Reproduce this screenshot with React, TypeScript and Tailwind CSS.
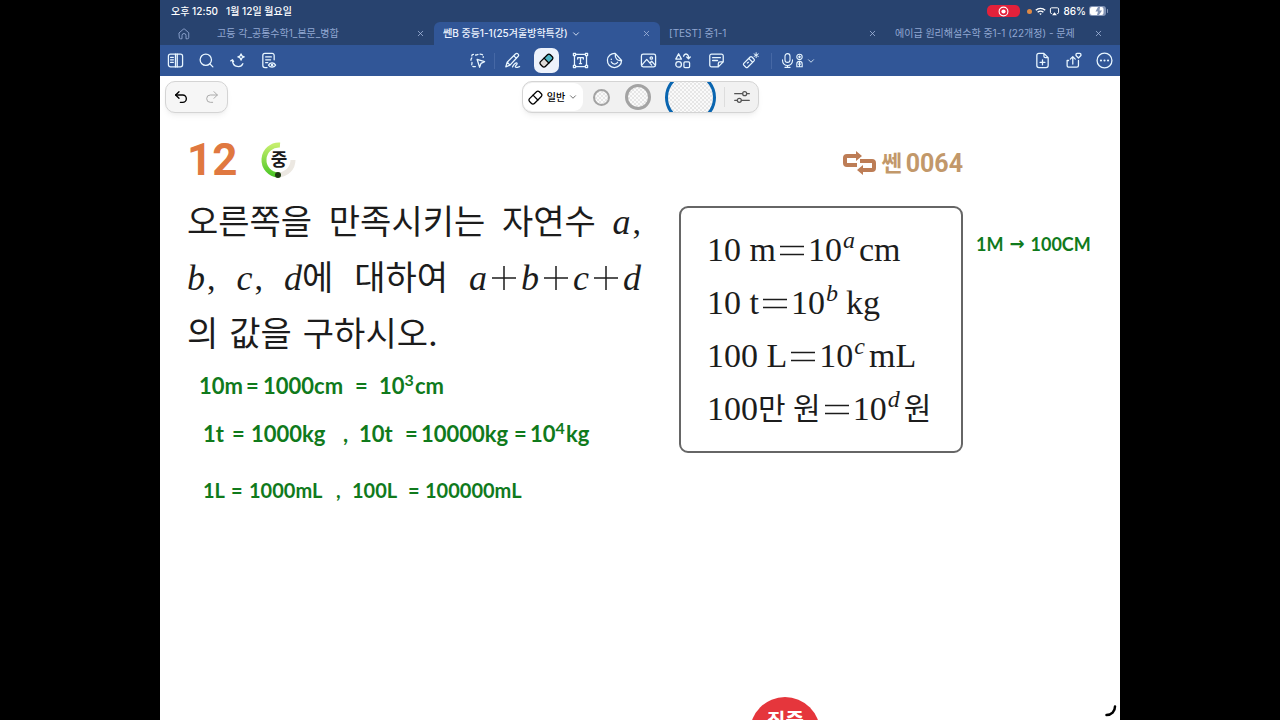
import { ReactNode } from "react";
import { ChevronDown, Redo2, Search, Undo2, X } from "lucide-react";

const Icon = ({ children, className = "size-[17px]" }: { children: ReactNode; className?: string }) => (
    <svg
        viewBox="0 0 24 24"
        fill="none"
        stroke="currentColor"
        strokeWidth="1.8"
        strokeLinecap="round"
        strokeLinejoin="round"
        className={className}
        aria-hidden="true"
    >
        {children}
    </svg>
);

const eraserShape = (
    <>
        <path d="M3.6 13.6 13.4 3.8a2.8 2.8 0 0 1 4 0l2.8 2.8a2.8 2.8 0 0 1 0 4l-9.8 9.8a2.8 2.8 0 0 1-4 0l-2.8-2.8a2.8 2.8 0 0 1 0-4Z" />
        <path d="m8.500 8.700 6.800 6.800" />
    </>
);

const leftTools = [
    {
        name: "사이드바",
        icon: (
            <Icon>
                <rect x="2" y="3" width="20" height="18" rx="3" />
                <path d="M12 3v18M5 7.5h4M5 11h4M5 14.5h4M14.5 3v18" />
            </Icon>
        ),
    },
    { name: "검색", icon: <Search className="size-[17px]" strokeWidth={1.8} /> },
    {
        name: "AI",
        icon: (
            <Icon>
                <path d="M2.500 12.500 5 11l1.500 2.500M5 12.500c.5 9.500 12 10 14.500 4M17 2.500c.5 3 1.500 4 4.500 4.500-3 .5-4 1.500-4.500 4.500-.5-3-1.500-4-4.500-4.500 3-.5 4-1.500 4.500-4.500Z" />
            </Icon>
        ),
    },
    {
        name: "읽기 모드",
        icon: (
            <Icon>
                <path d="M20 11V5a3 3 0 0 0-3-3H7a3 3 0 0 0-3 3v14a3 3 0 0 0 3 3h3M8 7h8M8 11h7M8 15h3" />
                <path d="M12 18.500c2.500-4 7.500-4 10 0-2.500 4-7.500 4-10 0Z" />
                <circle cx="17" cy="18.500" r="1" />
            </Icon>
        ),
    },
];

const centerTools = [
    {
        name: "펜",
        icon: (
            <Icon>
                <path d="m2.500 21 2-6.500L16.500 2.500a2 2 0 0 1 3 0l.5.5a2 2 0 0 1 0 3L8.500 18.500ZM4.500 14.500l4 4M14 5.500l3.500 3.500" />
                <path d="M12 21c2-4 5.500-7 6.500-5s-3.500 3.500-2.500 5 3 .5 6-.5" />
            </Icon>
        ),
    },
    {
        name: "지우개",
        active: true,
        icon: (
            <Icon>
                <path d="m8.500 8.700 4.900-4.900a2.800 2.800 0 0 1 4 0l2.800 2.800a2.800 2.800 0 0 1 0 4l-4.900 4.900Z" fill="#4fb5c5" stroke="none" />
                <path d="m8.500 8.700-4.900 4.900a2.800 2.800 0 0 0 0 4l2.800 2.800a2.800 2.800 0 0 0 4 0l4.900-4.900Z" fill="#dedad8" stroke="none" />
                {eraserShape}
            </Icon>
        ),
    },
    {
        name: "텍스트",
        icon: (
            <Icon>
                <path d="M3.500 5v14M20.500 5v14M5 3.500h14M5 20.500h14M8 10V8h8v2M12 8v8.500M10.500 16.500h3" />
                <rect x="2" y="2" width="3" height="3" />
                <rect x="19" y="2" width="3" height="3" />
                <rect x="2" y="19" width="3" height="3" />
                <rect x="19" y="19" width="3" height="3" />
            </Icon>
        ),
    },
    {
        name: "스티커",
        icon: (
            <Icon>
                <path d="M13 2a10 10 0 1 0 9 10c-6 1-9.500-3-9-10ZM13 2l9 10M7.500 14c2 4 7 4 9 .5M7.500 10v.5" />
            </Icon>
        ),
    },
    {
        name: "이미지",
        icon: (
            <Icon>
                <rect x="2" y="3" width="20" height="18" rx="2.500" />
                <circle cx="16" cy="8.500" r="1.700" />
                <path d="m2.500 18.500 7-8 7 8M14 15.500l2.500-2.500 5 5.500" />
            </Icon>
        ),
    },
    {
        name: "도형",
        icon: (
            <Icon>
                <path d="m6.500 2.500 4 7.500h-8Z" />
                <circle cx="6.500" cy="17.500" r="4" />
                <rect x="14" y="14" width="8" height="8" rx="1.500" />
                <path d="M13.500 6c1-4 5.500-4.500 7 0v3M18 7l2.500 2.500L23 7" />
            </Icon>
        ),
    },
    {
        name: "메모",
        icon: (
            <Icon>
                <path d="M5 3h14a2.500 2.500 0 0 1 2.500 2.500V14L14.500 21H5a2.500 2.500 0 0 1-2.500-2.500v-13A2.500 2.500 0 0 1 5 3ZM21.500 14h-4.500a2.500 2.500 0 0 0-2.500 2.500V21M6.500 8h11M6.500 12h7" />
            </Icon>
        ),
    },
    {
        name: "레이저",
        icon: (
            <Icon>
                <path d="m2.500 16 9-9a2 2 0 0 1 2.500 0l3 3a2 2 0 0 1 0 2.500l-9 9a2 2 0 0 1-2.500 0l-3-3a2 2 0 0 1 0-2.500ZM9.500 9l5.500 5.500M7.500 15.500l1.500-1" />
                <path d="M20 1v7M17 2.700l6 3.600M23 2.700l-6 3.600" strokeWidth="1.300" />
            </Icon>
        ),
    },
];

const rightTools = [
    {
        name: "페이지 추가",
        icon: (
            <Icon>
                <path d="M14 2H7a3 3 0 0 0-3 3v14a3 3 0 0 0 3 3h10a3 3 0 0 0 3-3V8ZM14 2v4a2 2 0 0 0 2 2h4M12 11v7M8.500 14.500h7" />
            </Icon>
        ),
    },
    {
        name: "공유",
        icon: (
            <Icon>
                <path d="M5 12H3v7a2.500 2.500 0 0 0 2.500 2.500h11A2.500 2.500 0 0 0 19 19v-7M11 17V7M7.500 10 11 6.500l3.500 3.500" />
                <path d="M17 2h4a1.500 1.500 0 0 1 1.500 1.500v1.500L19 8.500l-3.500-3.500V3.500A1.500 1.500 0 0 1 17 2Z" />
            </Icon>
        ),
    },
    {
        name: "더 보기",
        icon: (
            <Icon>
                <circle cx="12" cy="12" r="10.500" />
                <path d="M7 12h.01M12 12h.01M17 12h.01" strokeWidth="3" />
            </Icon>
        ),
    },
];

const tabs = [
    { title: "고등 각_공통수학1_본문_병합" },
    { title: "쎈B 중등1-1(25겨울방학특강)", active: true },
    { title: "[TEST] 중1-1" },
    { title: "에이급 원리해설수학 중1-1 (22개정) - 문제" },
];

const StatusBar = () => (
    <div className="flex h-[22px] items-center bg-[#28436f] px-[11px] text-[10px] font-medium text-white">
        <span>오후 12:50</span>
        <span className="ml-2">1월 12일 월요일</span>
        <div className="ml-auto flex items-center gap-[3px]">
            <span className="mr-1 flex h-3 w-[33px] items-center justify-center rounded-[5px] bg-[#e2213b]">
                <svg viewBox="0 0 12 12" className="size-[11px]">
                    <circle cx="6" cy="6" r="4.800" fill="none" stroke="#fff" strokeWidth="1.200" />
                    <circle cx="6" cy="6" r="2.300" fill="#fff" />
                </svg>
            </span>
            <span className="size-[5px] rounded-full bg-[#e08a45]" />
            <svg viewBox="0 0 12 10" className="h-[9px] w-[11px]" fill="none" stroke="#fff" strokeWidth="1.600">
                <path d="M.8 3.600a7.500 7.500 0 0 1 10.400 0M2.800 5.900a4.600 4.600 0 0 1 6.400 0" />
                <path d="M4.600 7.500a2 2 0 0 1 2.800 0L6 9Z" fill="#fff" stroke="none" />
            </svg>
            <svg viewBox="0 0 12 11" className="h-[9px] w-[11px]" fill="none" stroke="#fff" strokeWidth="1.200">
                <path d="M3 8H2.500A1.500 1.500 0 0 1 1 6.500v-4A1.500 1.500 0 0 1 2.500 1h7A1.500 1.500 0 0 1 11 2.500v4A1.500 1.500 0 0 1 9.500 8H9" />
                <path d="m6 6.500 3 3.500H3Z" fill="#fff" stroke="none" />
            </svg>
            <span>86%</span>
            <svg viewBox="0 0 20 10" className="h-[10px] w-5">
                <rect x="0" y="0" width="17" height="10" rx="3" fill="#8092b4" />
                <path d="M3 1h6L6.500 5.500H9L8 9H3a2 2 0 0 1-2-2V3a2 2 0 0 1 2-2ZM11 1h1.500a2 2 0 0 1 2 2v4a2 2 0 0 1-2 2H10l3-4.500h-2.500Z" fill="#fff" />
                <path d="M18.500 3.500v3" stroke="#8092b4" strokeLinecap="round" />
            </svg>
        </div>
    </div>
);

const TabBar = () => (
    <nav className="flex h-[23px] bg-[#28436f] pr-2 text-[10px] text-[#91a7d2]">
        <button aria-label="홈" className="flex w-12 items-center justify-center">
            <Icon className="size-3">
                <path d="m2.500 9.500 8-7a2.200 2.200 0 0 1 3 0l8 7V19a2.500 2.500 0 0 1-2.500 2.500H16V15a4 4 0 0 0-8 0v6.500H5A2.500 2.500 0 0 1 2.500 19Z" />
            </Icon>
        </button>
        {tabs.map((tab) => (
            <div
                key={tab.title}
                className={`flex min-w-0 flex-1 items-center px-[9px] ${tab.active ? "rounded-t-md bg-[#315697] font-medium text-[#eef4ff]" : ""}`}
            >
                <a href="#" className="truncate">{tab.title}</a>
                {tab.active && <ChevronDown className="ml-[3px] size-[10px]" />}
                <button aria-label="탭 닫기" className="ml-auto text-[#a9bce0]">
                    <X className="size-[9px]" strokeWidth={2} />
                </button>
            </div>
        ))}
    </nav>
);

const Toolbar = () => (
    <div className="grid h-[31px] grid-cols-[1fr_auto_1fr] items-center bg-[#315697] text-[#e8f6ff]">
        <div className="flex">
            {leftTools.map((tool) => (
                <button key={tool.name} aria-label={tool.name} className="flex w-[31px] justify-center">
                    {tool.icon}
                </button>
            ))}
        </div>
        <div className="flex items-center pr-1">
            <button aria-label="올가미" className="flex w-[34px] justify-center">
                <Icon>
                    <path
                        d="M9 20.500H6.500c-2 0-3-1.500-2.500-3.500.5-1.500.5-2.500-.5-4s-1-2.500 0-4 .5-2.500.5-3.500C4 4 5 3 7 3.500c2 1 3.500 1 5.500 0S17 3 18 3.500c2 .5 2.500 2 2 4"
                        strokeDasharray="3.500 3"
                    />
                    <path d="m11.500 10.500 10.500 3-5 2.500-2 5.500Z" />
                </Icon>
            </button>
            <span className="h-4 w-px bg-[#4668a5]" />
            {centerTools.map((tool) => (
                <button key={tool.name} aria-label={tool.name} className="flex w-[34px] justify-center">
                    {tool.active ? (
                        <span className="flex size-[25px] items-center justify-center rounded-[7px] bg-[#edf2fb] text-black">
                            {tool.icon}
                        </span>
                    ) : (
                        tool.icon
                    )}
                </button>
            ))}
            <span className="ml-1 h-4 w-px bg-[#4668a5]" />
            <button aria-label="녹음" className="ml-2 flex items-center">
                <Icon className="size-[15px]">
                    <rect x="8" y="1" width="8" height="14" rx="4" />
                    <path d="M4 11v1a8 8 0 0 0 16 0v-1M12 20v3M8 23h8" />
                </Icon>
                <svg viewBox="0 0 10 16" className="h-[15px] w-[9px]" fill="none" stroke="currentColor" strokeWidth="1.200">
                    <circle cx="5" cy="4" r="3" />
                    <path d="M3.500 4h3M5 2.500v3M2 15v-3a3 3 0 0 1 6 0v3ZM3.500 12h3M5 9.500V15" />
                </svg>
                <ChevronDown className="ml-[2px] size-[10px]" />
            </button>
        </div>
        <div className="flex justify-end">
            {rightTools.map((tool) => (
                <button key={tool.name} aria-label={tool.name} className="flex w-[31px] justify-center">
                    {tool.icon}
                </button>
            ))}
        </div>
    </div>
);

const checker = "bg-[repeating-conic-gradient(#e6e6e6_0_25%,#fafafa_0_50%)] bg-size-[4px_4px]";

const EraserOptions = () => (
    <div className="grid grid-cols-[1fr_auto_1fr] items-center px-[5px] pt-[5px]">
        <div>
            <div className="flex h-8 w-[63px] items-center justify-around rounded-[10px] border border-[#d4d4d4] bg-[#f6f6f6] shadow-md shadow-black/5">
                <button aria-label="실행 취소"><Undo2 className="size-4 text-black" strokeWidth={2} /></button>
                <button aria-label="다시 실행"><Redo2 className="size-4 text-[#aaa]" strokeWidth={1.5} /></button>
            </div>
        </div>
        <div className="flex h-8 w-[237px] items-center rounded-[10px] border border-[#d4d4d4] bg-[#f1f1f1] shadow-md shadow-black/5">
            <button className="flex h-7 w-[60px] items-center justify-center rounded-[9px] bg-white text-[10px] font-medium text-black">
                <Icon className="mr-[3px] size-[17px]">{eraserShape}</Icon>
                일반
                <ChevronDown className="ml-[3px] size-[10px] text-[#555]" />
            </button>
            <button aria-label="작게" className={`ml-[10px] size-[17px] rounded-full border-2 border-[#a3a3a3] ${checker}`} />
            <button aria-label="보통" className={`ml-[15px] size-[26px] rounded-full border-3 border-[#a3a3a3] ${checker}`} />
            <span className="ml-[14px] flex h-[30px] items-center overflow-hidden">
                <button aria-label="크게" className={`size-[51px] shrink-0 rounded-full border-3 border-[#0965b0] ${checker}`} />
            </span>
            <span className="ml-2 h-5 w-px bg-[#ddd]" />
            <button aria-label="설정" className="ml-[9px] text-[#555]">
                <Icon className="size-4">
                    <path d="M1 7h12M19 7h4M1 17h4M11 17h12" />
                    <circle cx="16" cy="7" r="3" />
                    <circle cx="8" cy="17" r="3" />
                </Icon>
            </button>
        </div>
    </div>
);

const Var = ({ children }: { children: ReactNode }) => (
    <i className="font-['Liberation_Serif',serif] text-[36px] leading-none">{children}</i>
);

const Comma = () => <span className="ml-[2px] font-['Liberation_Serif',serif]">,</span>;

const Plus = () => (
    <svg viewBox="0 0 26 26" className="size-[26px]" stroke="currentColor" strokeWidth="1.500" role="img" aria-label="+">
        <path d="M1 13h24M13 1v24" />
    </svg>
);

const conditions = [
    { left: "10 m", power: "a", right: "cm" },
    { left: "10 t", power: "b", right: "kg", gap: true },
    { left: "100 L", power: "c", right: "mL" },
    { left: "100", won: "만 원", power: "d", right: "원" },
];

// each word carries the width it takes on the page, up to the next one
const notes = [
    {
        row: "mt-2 text-[22px]",
        words: [
            { text: "10m", width: "w-[47px]" },
            { text: "=", width: "w-[17px]" },
            { text: "1000cm", width: "w-[92px]" },
            { text: "=", width: "w-6" },
            { text: "10", sup: "3", width: "w-9" },
            { text: "cm", width: "w-9" },
        ],
    },
    {
        row: "mt-4 pl-1 text-[22px]",
        words: [
            { text: "1t", width: "w-[29px]" },
            { text: "=", width: "w-[19px]" },
            { text: "1000kg", width: "w-[92px]" },
            { text: ",", width: "w-4" },
            { text: "10t", width: "w-[46px]" },
            { text: "=", width: "w-4" },
            { text: "10000kg", width: "w-[93px]" },
            { text: "=", width: "w-4" },
            { text: "10", sup: "4", width: "w-9" },
            { text: "kg", width: "w-8" },
        ],
    },
    {
        row: "mt-6 pl-1 text-[20px]",
        words: [
            { text: "1L", width: "w-7" },
            { text: "=", width: "w-[18px]" },
            { text: "1000mL", width: "w-[87px]" },
            { text: ",", width: "w-4" },
            { text: "100L", width: "w-[56px]" },
            { text: "=", width: "w-[17px]" },
            { text: "100000mL", width: "w-24" },
        ],
    },
];

const Problem = () => (
    <section className="flex px-[27px] pt-[25px] text-[#1c1c1c]">
        <div className="w-[454px] shrink-0">
            <header className="flex h-11 items-center">
                <h1 className="w-[72px] font-[Roboto,sans-serif] text-[44px] leading-none font-bold text-[#e07840]">
                    12
                </h1>
                <div className="grid size-10 place-items-center">
                    <svg viewBox="0 0 40 40" className="col-start-1 row-start-1 size-10" fill="none" strokeWidth="5">
                        <defs>
                            <linearGradient id="level" x1="0" y1="1" x2="0" y2="0">
                                <stop offset="0" stopColor="#4fc828" />
                                <stop offset="1" stopColor="#c4ee6c" />
                            </linearGradient>
                        </defs>
                        <path d="M34 20a15 15 0 0 1-15 15" stroke="#ece8e2" />
                        <path d="M21 5a15 15 0 0 0-2 30" stroke="url(#level)" />
                        <circle cx="19" cy="35" r="3" fill="#1d3a10" />
                    </svg>
                    <b className="col-start-1 row-start-1 text-[18px] leading-none">중</b>
                </div>
            </header>
            <div className="mt-3 text-[34px] leading-[56px] whitespace-nowrap">
                <p className="flex h-14 items-center justify-between">
                    <span>오른쪽을</span>
                    <span>만족시키는</span>
                    <span>자연수</span>
                    <span><Var>a</Var><Comma /></span>
                </p>
                <p className="flex h-14 items-center justify-between">
                    <span><Var>b</Var><Comma /></span>
                    <span><Var>c</Var><Comma /></span>
                    <span><Var>d</Var>에</span>
                    <span>대하여</span>
                    <span className="flex items-center gap-1">
                        <Var>a</Var><Plus /><Var>b</Var><Plus /><Var>c</Var><Plus /><Var>d</Var>
                    </span>
                </p>
                <p className="flex h-14 items-center gap-[11px]">
                    <span>의</span>
                    <span>값을</span>
                    <span>구하시오.</span>
                </p>
            </div>
            <div className="pl-3 font-[Lato,sans-serif] font-bold text-[#107a1c]">
                {notes.map((note, i) => (
                    <p key={i} className={`flex h-8 leading-8 whitespace-nowrap ${note.row}`}>
                        {note.words.map((word, j) => (
                            <span key={j} className={`shrink-0 leading-8 ${word.width}`}>
                                {word.text}
                                {word.sup && <sup className="text-base">{word.sup}</sup>}
                            </span>
                        ))}
                    </p>
                ))}
            </div>
        </div>
        <div className="ml-[38px] w-[284px] shrink-0">
            <div className="flex h-[50px] items-center justify-end gap-1 text-[#c2986a]">
                <svg viewBox="0 0 36 26" className="h-[26px] w-9" fill="none" stroke="#bd7d56" strokeWidth="4">
                    <path d="M16 15H6a2 2 0 0 1-2-2V8a2 2 0 0 1 2-2h10M19 11h12a2 2 0 0 1 2 2v5a2 2 0 0 1-2 2H21" />
                    <path d="m15 1 6 5-6 5ZM22 15l-6 5 6 5Z" fill="#bd7d56" stroke="none" />
                </svg>
                <span className="text-[22px] leading-none font-bold">쎈</span>
                <span className="font-[Roboto,sans-serif] text-[25px] leading-none font-bold">0064</span>
            </div>
            <ul className="mt-[18px] rounded-[9px] border-2 border-[#666] px-[26px] py-[15px] pb-[16px] font-['Liberation_Serif','Noto_Sans_CJK_KR',serif] text-[34px] whitespace-nowrap">
                {conditions.map((item) => (
                    <li key={item.power} className="flex h-[53px] items-center leading-none">
                        <span>{item.left}</span>
                        {item.won && <span className="text-[30px]">{item.won}</span>}
                        <svg viewBox="0 0 32 20" className="h-5 w-8 shrink-0" stroke="currentColor" strokeWidth="1.500" role="img" aria-label="=">
                            <path d="M4 6.500h24M4 14.500h24" />
                        </svg>
                        <span>10</span>
                        <i className="mb-5 ml-px text-[24px] leading-none">{item.power}</i>
                        <span className={`${item.gap ? "ml-2" : "ml-1"} ${item.won ? "text-[30px]" : ""}`}>{item.right}</span>
                    </li>
                ))}
            </ul>
        </div>
        <p className="mt-[90px] ml-[13px] flex h-8 gap-[6px] font-[Lato,sans-serif] text-[18px] leading-8 font-bold whitespace-nowrap text-[#107a1c]">
            <span>1M</span>
            <span className="font-['DejaVu_Sans',sans-serif]">→</span>
            <span>100CM</span>
        </p>
    </section>
);

const App = () => {
    return (
        <div className="grid h-screen grid-cols-[1fr_6fr_1fr] overflow-hidden bg-black font-[Inter,'Noto_Sans_CJK_KR',sans-serif]">
            <main className="relative col-start-2 flex min-w-0 flex-col overflow-hidden bg-white">
                <StatusBar />
                <TabBar />
                <Toolbar />
                <EraserOptions />
                <Problem />
                <div className="mt-auto h-[23px] overflow-hidden pl-[61.5%]">
                    <div className="flex size-[70px] justify-center rounded-full bg-[#e5363c] pt-[14px] text-[20px] leading-5 font-bold text-white">
                        집중
                    </div>
                </div>
                <svg viewBox="0 0 12 12" className="absolute right-[3px] bottom-[3px] size-3" fill="none" stroke="#000" strokeWidth="2.500" strokeLinecap="round">
                    <path d="M10 1.500C10 6.500 6.500 10 1.500 10" />
                </svg>
            </main>
        </div>
    );
};

export default App;
